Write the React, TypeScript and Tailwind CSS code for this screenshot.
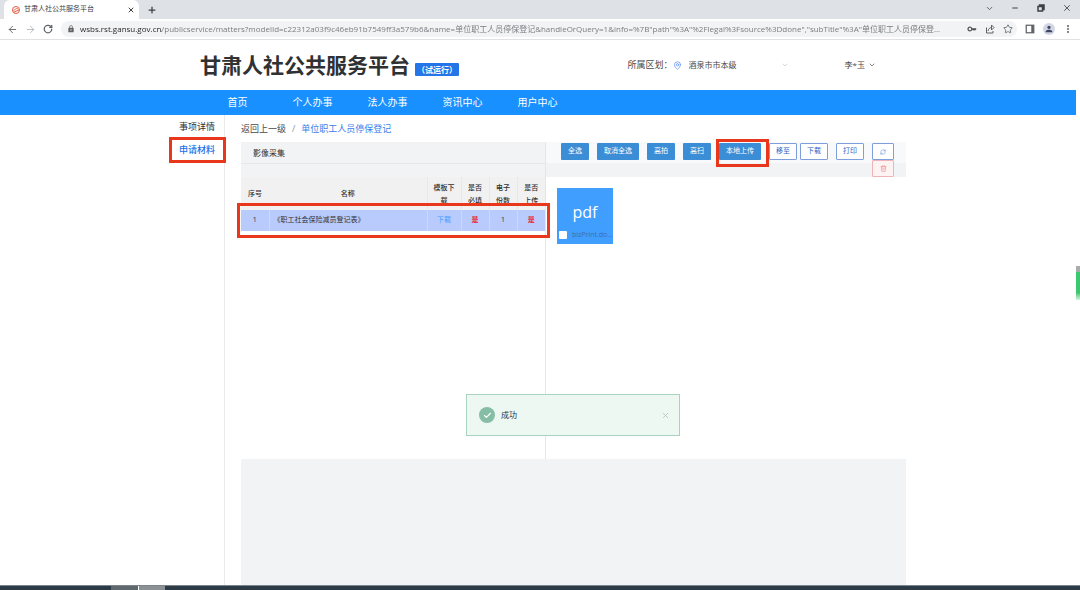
import {
  ArrowLeft,
  ArrowRight,
  Check,
  ChevronDown,
  EllipsisVertical,
  MapPin,
  Minus,
  Plus,
  RefreshCw,
  RotateCw,
  Star,
  Trash2,
  X,
} from "lucide-react";
import { MdKey, MdLock, MdPerson } from "react-icons/md";
import clsx from "clsx";

const SITE_NAME = "甘肃人社公共服务平台";

const PAGE_URL =
  'wsbs.rst.gansu.gov.cn/publicservice/matters?modelId=c22312a03f9c46eb91b7549ff3a579b6&name=单位职工人员停保登记&handleOrQuery=1&info=%7B"path"%3A"%2Flegal%3Fsource%3Ddone","subTitle"%3A"单位职工人员停保登...';

const navItems = ["首页", "个人办事", "法人办事", "资讯中心", "用户中心"];

const scanActions = ["全选", "取消全选", "高拍", "高扫"];

function RestoreIcon() {
  return (
    <svg viewBox="0 0 16 16" className="size-2" fill="none" stroke="currentColor" strokeWidth="3" aria-hidden="true">
      <path d="M2 5h9v9H2zM5 5V2h9v9h-3" />
    </svg>
  );
}

function TabStrip() {
  return (
    <div className="flex h-[19px] items-stretch bg-[#dee1e6] pl-1 text-[#3c4043]">
      <div className="flex w-[135px] items-center rounded-t-md bg-white pr-1 pl-2">
        <svg viewBox="0 0 16 16" className="size-2" aria-hidden="true">
          <circle cx="8" cy="8" r="7" fill="none" stroke="#e4573d" strokeWidth="2" />
          <path d="M3 9c3 0 3-4 6-4s3 2 4 2M4 12c3 0 4-3 9-3" fill="none" stroke="#e4573d" strokeWidth="2" />
        </svg>
        <span className="ml-1 flex-1 text-[7px] whitespace-nowrap">{SITE_NAME}</span>
        <button type="button" aria-label="关闭标签页">
          <X size={8} strokeWidth={3} />
        </button>
      </div>
      <button type="button" aria-label="新标签页" className="ml-2">
        <Plus size={10} strokeWidth={3} />
      </button>
      <div className="ml-auto flex h-4 items-center">
        <button type="button" aria-label="搜索标签页" className="flex w-[26px] justify-center">
          <ChevronDown size={9} />
        </button>
        <button type="button" aria-label="最小化" className="flex w-[26px] justify-center">
          <Minus size={8} strokeWidth={3} />
        </button>
        <button type="button" aria-label="还原" className="flex w-[26px] justify-center">
          <RestoreIcon />
        </button>
        <button type="button" aria-label="关闭" className="flex w-[26px] justify-center">
          <X size={10} strokeWidth={2} />
        </button>
      </div>
    </div>
  );
}

function ShareIcon() {
  return (
    <svg viewBox="0 0 20 20" className="size-[10px]" fill="none" stroke="currentColor" strokeWidth="2" aria-hidden="true">
      <path d="M3 7v11h13v-4M6 14c1-5 4-7 8-7M13 2l5 5-5 5z" />
    </svg>
  );
}

function SidePanelIcon() {
  return (
    <svg viewBox="0 0 16 16" className="size-[10px]" fill="none" stroke="currentColor" strokeWidth="2" aria-hidden="true">
      <rect x="2" y="2" width="12" height="12" />
      <path d="M12 2v12" strokeWidth="4" />
    </svg>
  );
}

function AddressBar() {
  return (
    <div className="flex h-[21px] items-center border-b border-[#dfe1e5] bg-white pr-[7px] pl-[7px] text-[#5f6368]">
      <button type="button" aria-label="后退" className="w-[18px]">
        <ArrowLeft size={11} strokeWidth={2} />
      </button>
      <button type="button" aria-label="前进" className="w-[18px] text-[#b4b7bb]">
        <ArrowRight size={11} strokeWidth={2} />
      </button>
      <button type="button" aria-label="重新加载" className="w-[18px]">
        <RotateCw size={10} strokeWidth={3} />
      </button>
      <div className="flex h-4 min-w-0 flex-1 items-center rounded-full bg-[#f1f3f4] pr-1 pl-[6px]">
        <MdLock size={8} className="shrink-0" />
        {/* host part darker than the path */}
        <input
          aria-label="地址"
          readOnly
          value={PAGE_URL}
          className="ml-[5px] min-w-0 flex-1 bg-linear-to-r from-[#202124] from-[82px] to-[#73777b] to-[82px] bg-clip-text text-[8px] text-transparent outline-none"
        />
        <div className="flex items-center gap-2">
          <MdKey size={10} className="text-[#4b4e52]" />
          <ShareIcon />
          <Star size={10} strokeWidth={2} />
        </div>
      </div>
      <div className="ml-2 flex items-center gap-2">
        <SidePanelIcon />
        <span className="flex size-3 items-center justify-center rounded-full bg-[#d3d6e4] text-[#3f4560]">
          <MdPerson size={10} />
        </span>
        <EllipsisVertical size={10} strokeWidth={3} />
      </div>
    </div>
  );
}

function SiteHeader() {
  return (
    <header className="mx-auto flex h-[50px] w-full max-w-[676px] items-center">
      <h1 className="text-[21px] leading-6 font-bold whitespace-nowrap text-[#303133]">{SITE_NAME}</h1>
      <span className="mt-2 ml-[5px] rounded-[1px] bg-[#2476e8] px-[2px] text-[8px] leading-[13px] font-bold whitespace-nowrap text-white">
        （试运行）
      </span>
      <div className="ml-auto flex items-center text-[#4a4a4a]">
        <label htmlFor="region" className="text-[9px]">
          所属区划：
        </label>
        <MapPin size={9} strokeWidth={2} className="text-[#5b8ff9]" />
        <div className="relative ml-[7px] flex w-[100px] items-center">
          <select id="region" className="w-full appearance-none bg-transparent text-[8px] outline-none">
            <option>酒泉市市本级</option>
          </select>
          <ChevronDown size={8} className="pointer-events-none absolute right-0 text-[#c0c4cc]" />
        </div>
        <button type="button" className="ml-[56px] flex items-center gap-[3px] text-[8px]">
          李*玉
          <ChevronDown size={8} />
        </button>
      </div>
    </header>
  );
}

function SiteNav() {
  return (
    <nav className="bg-[#1890ff]">
      <div className="mx-auto flex max-w-[676px]">
        {navItems.map((item) => (
          <a key={item} href="#" className="w-[75px] text-center text-[10px] leading-[25px] text-white">
            {item}
          </a>
        ))}
      </div>
    </nav>
  );
}

function Highlight({ className }: { className: string }) {
  return <div className={clsx("pointer-events-none absolute z-10 border-3 border-[#e8371a]", className)} />;
}

function SideMenu() {
  return (
    <aside className="w-[55px] shrink-0 border-r border-[#e8eaec] text-center text-[9px] text-[#303133]">
      <a href="#" className="block leading-[23px]">
        事项详情
      </a>
      <div className="relative">
        <a href="#" className="block leading-[23px] font-medium text-[#1d6fe8]">
          申请材料
        </a>
        <Highlight className="-top-px -right-[2px] -bottom-[2px] -left-px" />
      </div>
    </aside>
  );
}

function MaterialTable() {
  return (
    <table className="w-full table-fixed text-center text-[7px] text-[#303133]">
      <colgroup>
        <col className="w-7" />
        <col />
        <col className="w-[34px]" />
        <col className="w-7" />
        <col className="w-7" />
        <col className="w-7" />
      </colgroup>
      <thead>
        <tr className="h-[33px] bg-[#f2f1f1] leading-[13px]">
          <th className="font-medium">序号</th>
          <th className="font-medium">名称</th>
          <th className="border-l border-[#e8e8ea] px-[6px] font-medium">模板下载</th>
          <th className="border-l border-[#e8e8ea] px-[6px] font-medium">是否必填</th>
          <th className="border-l border-[#e8e8ea] px-[6px] font-medium">电子份数</th>
          <th className="border-l border-[#e8e8ea] px-[6px] font-medium">是否上传</th>
        </tr>
      </thead>
      <tbody>
        <tr className="h-[21px] bg-[#b9cbfd]">
          <td>1</td>
          <td className="border-l border-[#ccd8fb] pl-1 text-left">《职工社会保险减员登记表》</td>
          <td className="border-l border-[#ccd8fb]">
            <a href="#" className="text-[#409eff]">
              下载
            </a>
          </td>
          <td className="border-l border-[#ccd8fb] font-bold text-[#f0203c]">是</td>
          <td className="border-l border-[#ccd8fb]">1</td>
          <td className="border-l border-[#ccd8fb] font-bold text-[#f0203c]">是</td>
        </tr>
      </tbody>
    </table>
  );
}

const solidButton = "block h-[17px] rounded-[1px] bg-[#3b8ed6] px-[7px] text-[7px] whitespace-nowrap text-white";
const plainButton =
  "h-[17px] rounded-[1px] border border-[#7f9fdc] bg-white px-[6px] text-[7px] whitespace-nowrap text-[#2f5fc4]";

function ScanToolbar() {
  return (
    <div className="flex h-[35px] items-start bg-linear-to-b from-[#f8f9fa] from-[21px] to-[#f2f3f5] to-[21px] pt-[1px] pl-[15px]">
      <div className="flex gap-2">
        {scanActions.map((action) => (
          <button key={action} type="button" className={solidButton}>
            {action}
          </button>
        ))}
        <div className="relative">
          <button type="button" className={solidButton}>
            本地上传
          </button>
          <Highlight className="-top-1 -right-2 -bottom-[7px] -left-[3px]" />
        </div>
      </div>
      <div className="ml-2 flex gap-[3px]">
        <button type="button" className={plainButton}>
          移至
        </button>
        <button type="button" className={plainButton}>
          下载
        </button>
      </div>
      <button type="button" className={clsx(plainButton, "ml-2")}>
        打印
      </button>
      <div className="ml-2 flex flex-col">
        <button
          type="button"
          aria-label="刷新"
          className="flex h-[17px] w-[22px] items-center justify-center rounded-[1px] border border-[#7f9fdc] bg-white text-[#5b86d8]"
        >
          <RefreshCw size={6} />
        </button>
        <button
          type="button"
          aria-label="删除"
          className="flex h-[17px] w-[22px] items-center justify-center rounded-[1px] border border-[#f0b4b8] bg-[#fdf3f3] text-[#ec8b90]"
        >
          <Trash2 size={7} />
        </button>
      </div>
    </div>
  );
}

function PdfCard() {
  return (
    <div className="flex size-14 flex-col bg-[#409eff]">
      <div className="flex-1 pt-3 text-center text-base leading-6 text-white">pdf</div>
      <label className="flex items-center gap-[5px] pb-[2px] pl-[2px] text-[7px] leading-[14px] text-[#3f6fa6]">
        <input type="checkbox" className="size-2 appearance-none rounded-[1px] bg-white" />
        bizPrint.do...
      </label>
    </div>
  );
}

function Toast() {
  return (
    <div
      role="alert"
      className="absolute top-[252px] left-[225px] flex h-[42px] w-[214px] items-center border border-[#a9d3c0] bg-[#edf8f2] pr-[9px] pl-3 text-[8px] text-[#303133]"
    >
      <span className="flex size-4 items-center justify-center rounded-full bg-[#86bda5] text-white">
        <Check size={9} strokeWidth={3} />
      </span>
      <span className="ml-[6px] flex-1">成功</span>
      <button type="button" aria-label="关闭提示" className="text-[#b4bcb8]">
        <X size={9} />
      </button>
    </div>
  );
}

function MaterialPanel() {
  return (
    <section className="relative flex flex-1 flex-col bg-[#f2f3f5]">
      <div className="flex min-h-[317px] bg-white">
        <div className="w-[305px] shrink-0 border-r border-[#e4e6e9]">
          <h2 className="border-b border-[#e6e8eb] bg-[#f2f3f5] pl-3 text-[8px] leading-[21px] text-[#303133]">
            影像采集
          </h2>
          <div className="h-[13px] bg-[#f2f3f5]" />
          <div className="relative">
            <MaterialTable />
            <Highlight className="top-[26px] -right-[5px] -bottom-[7px] -left-1" />
          </div>
        </div>
        <div className="min-w-0 flex-1">
          <ScanToolbar />
          <div className="p-[11px]">
            <PdfCard />
          </div>
        </div>
      </div>
      <Toast />
    </section>
  );
}

export default function App() {
  return (
    <div className="flex min-h-screen flex-col bg-white font-['Open_Sans','Noto_Sans_CJK_SC',sans-serif]">
      <TabStrip />
      <AddressBar />
      <div className="flex flex-1">
        <div className="flex min-w-0 flex-1 flex-col">
          <SiteHeader />
          <SiteNav />
          <div className="mx-auto flex w-full max-w-[736px] flex-1">
            <SideMenu />
            <main className="ml-4 flex min-w-0 flex-1 flex-col">
              <div className="flex gap-[6px] text-[9px] leading-[27px] text-[#4a4a4a]">
                <a href="#">返回上一级</a>
                <span className="text-[#909399]">/</span>
                <a href="#" className="text-[#3d7eea]">
                  单位职工人员停保登记
                </a>
              </div>
              <MaterialPanel />
            </main>
          </div>
        </div>
        {/* Scrollbar */}
        <div className="w-1 pt-[226px]">
          <div className="h-[6px] bg-[#a8acab]" />
          <div className="h-7 bg-linear-to-b from-[#3cc86e] from-75% to-[#d4f5de]" />
        </div>
      </div>
      {/* Taskbar */}
      <div className="flex h-[5px] border-t border-[#7b858b] bg-[#2c3b45] pl-[111px]">
        <div className="w-7 border-r border-white bg-[#5f686d]" />
        <div className="w-[26px] bg-[#8b9195]" />
      </div>
    </div>
  );
}
